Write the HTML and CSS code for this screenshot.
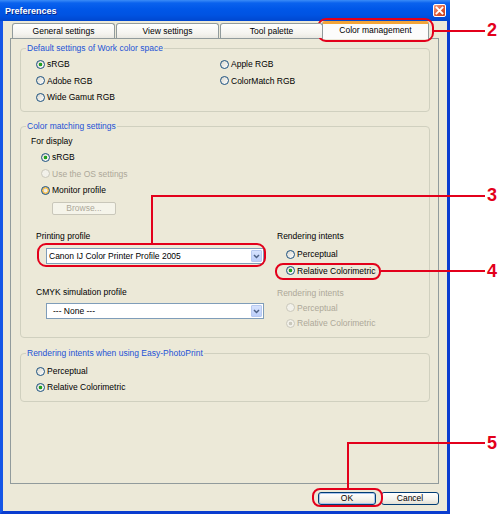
FILE: index.html
```html
<!DOCTYPE html>
<html>
<head>
<meta charset="utf-8">
<title>Preferences</title>
<link rel="stylesheet" href="styles.css">
</head>
<body>
<div class="page">
  <div class="window">
    <div class="titlebar">
      <span class="title">Preferences</span>
      <span class="close"><svg width="9" height="9" viewBox="0 0 9 9"><path d="M1.5 1.5 L7.5 7.5 M7.5 1.5 L1.5 7.5" stroke="#fff" stroke-width="1.8" stroke-linecap="square"/></svg></span>
    </div>
    <div class="client">
      <div class="tabs">
        <div class="tab">General settings</div>
        <div class="tab">View settings</div>
        <div class="tab">Tool palette</div>
        <div class="tab active">Color management</div>
      </div>
      <div class="panel">
        <fieldset class="group g1">
          <legend>Default settings of Work color space</legend>
          <div class="body grid2">
            <div class="opt"><span class="radio on"></span>sRGB</div>
            <div class="opt"><span class="radio"></span>Apple RGB</div>
            <div class="opt"><span class="radio"></span>Adobe RGB</div>
            <div class="opt"><span class="radio"></span>ColorMatch RGB</div>
            <div class="opt"><span class="radio"></span>Wide Gamut RGB</div>
          </div>
        </fieldset>

        <fieldset class="group g2">
          <legend>Color matching settings</legend>
          <div class="display">
            <div class="head">For display</div>
            <div class="opts">
              <div class="opt"><span class="radio on"></span>sRGB</div>
              <div class="opt dis"><span class="radio"></span>Use the OS settings</div>
              <div class="opt"><span class="radio hover"></span>Monitor profile</div>
            </div>
            <div class="browse">Browse...</div>
          </div>
          <div class="profiles">
            <div class="col">
              <div class="lbl">Printing profile</div>
              <div class="select s1"><span class="val">Canon IJ Color Printer Profile 2005</span><span class="arrow"><svg width="7" height="5" viewBox="0 0 7 5"><path d="M1 1 L3.5 3.5 L6 1" fill="none" stroke="#4d6185" stroke-width="1.5"/></svg></span></div>
              <div class="lbl l2">CMYK simulation profile</div>
              <div class="select s2"><span class="val none">--- None ---</span><span class="arrow"><svg width="7" height="5" viewBox="0 0 7 5"><path d="M1 1 L3.5 3.5 L6 1" fill="none" stroke="#4d6185" stroke-width="1.5"/></svg></span></div>
            </div>
            <div class="col right">
              <div class="lbl">Rendering intents</div>
              <div class="opt r1"><span class="radio"></span>Perceptual</div>
              <div class="opt r2"><span class="radio on"></span>Relative Colorimetric</div>
              <div class="lbl dis l3">Rendering intents</div>
              <div class="opt dis r3"><span class="radio"></span>Perceptual</div>
              <div class="opt dis r4"><span class="radio on"></span>Relative Colorimetric</div>
            </div>
          </div>
        </fieldset>

        <fieldset class="group g3">
          <legend>Rendering intents when using Easy-PhotoPrint</legend>
          <div class="body">
            <div class="opt"><span class="radio"></span>Perceptual</div>
            <div class="opt"><span class="radio on"></span>Relative Colorimetric</div>
          </div>
        </fieldset>
      </div>
      <div class="footer">
        <div class="btn default">OK</div>
        <div class="btn">Cancel</div>
      </div>
    </div>
  </div>

  <div class="callouts">
    <div class="oval o1"></div>
    <div class="oval o2"></div>
    <div class="oval o3"></div>
    <div class="oval o4"></div>
    <div class="line h1"></div>
    <div class="line h2"></div>
    <div class="line v2"></div>
    <div class="line h3"></div>
    <div class="line h4"></div>
    <div class="line v4"></div>
    <div class="num n2">2</div>
    <div class="num n3">3</div>
    <div class="num n4">4</div>
    <div class="num n5">5</div>
  </div>
</div>
</body>
</html>
```

FILE: styles.css
```css
html, body {
  margin: 0;
  padding: 0;
  background: #fff;
}
body {
  font-family: "Liberation Sans", Arial, sans-serif;
  font-size: 8.5px;
  color: #000;
}
.page {
  position: relative;
  width: 500px;
  height: 514px;
  overflow: hidden;
}
.window {
  width: 450px;
  height: 514px;
  display: flex;
  flex-direction: column;
}
.titlebar {
  flex: none;
  height: 21px;
  box-sizing: border-box;
  display: flex;
  align-items: center;
  padding: 0 4px 0 5px;
  background: linear-gradient(#3b8cf7 0, #0a62ee 3px, #0057e8 9px, #0053e2 15px, #0047cf 21px);
}
.title {
  color: #fff;
  font-weight: bold;
  font-size: 9px;
  text-shadow: 1px 1px 0 #0a2a8c;
}
.close {
  margin-left: auto;
  width: 13px;
  height: 13px;
  box-sizing: border-box;
  border: 1px solid #fff;
  border-radius: 2px;
  background: linear-gradient(135deg, #f2a186, #de5a36 55%, #c2401e);
  display: flex;
  align-items: center;
  justify-content: center;
}
.client {
  flex: 1;
  display: flex;
  flex-direction: column;
  background: #ece9d8;
  border: 3px solid #0a3ccf;
  border-left-color: #1556e6;
  border-top: 0;
  min-height: 0;
}
.tabs {
  flex: none;
  height: 17px;
  display: flex;
  align-items: flex-end;
  gap: 1px;
  padding-left: 9px;
  position: relative;
  z-index: 1;
}
.tab {
  flex: none;
  width: 103px;
  height: 15px;
  box-sizing: border-box;
  border: 1px solid #919b9c;
  border-bottom: 0;
  border-radius: 3px 3px 0 0;
  background: linear-gradient(#ffffff, #f4f3ee 70%, #e9e8e1);
  text-align: center;
  line-height: 14px;
}
.tab.active {
  width: 107px;
  height: 18px;
  margin: 0 -2px -1px;
  background: #fcfcfb;
  border-top: 3px solid #f2a53a;
  line-height: 13px;
}
.panel {
  flex: 1;
  margin: 0 8px 0 7px;
  border: 1px solid #919b9c;
  background: #ece9d8;
  padding: 4px 8px 0 9px;
  display: flex;
  flex-direction: column;
  min-height: 0;
}
.group {
  margin: 0;
  padding: 0;
  border: 1px solid #d0d0bf;
  border-radius: 4px;
  min-width: 0;
}
.group legend {
  margin-left: 5px;
  padding: 0 1px;
  line-height: 10px;
  color: #1d52d6;
}
.g1 .body {
  display: grid;
  grid-template-columns: 184px 1fr;
  grid-auto-rows: 16.5px;
  padding: 3px 0 5px 15px;
}
.opt {
  display: flex;
  align-items: center;
  white-space: nowrap;
}
.radio {
  flex: none;
  width: 9px;
  height: 9px;
  box-sizing: border-box;
  border: 1px solid #1c5180;
  border-radius: 50%;
  background: linear-gradient(135deg, #d9d7cc, #ffffff);
  margin-right: 2px;
}
.radio.on {
  background: radial-gradient(circle at center, #21a121 0, #21a121 1.5px, transparent 2.1px), linear-gradient(135deg, #d9d7cc, #ffffff);
}
.radio.hover {
  box-shadow: inset 0 0 0 1.5px #f9c04c;
}
.opt.dis, .lbl.dis {
  color: #aca899;
}
.opt.dis .radio {
  border-color: #cac8bb;
  background: #f2f1ea;
}
.opt.dis .radio.on {
  background: radial-gradient(circle at center, #cac8bb 0, #cac8bb 1.5px, transparent 2.1px), #f2f1ea;
}
.g2 {
  margin-top: 9.5px;
}
.display {
  padding: 2px 0 0 10px;
}
.display .head {
  height: 16px;
  line-height: 16px;
}
.display .opts {
  padding-left: 10px;
}
.display .opt {
  height: 16.5px;
}
.browse {
  margin: 3px 0 0 21px;
  width: 64px;
  height: 13px;
  box-sizing: border-box;
  border: 1px solid #c9c7ba;
  border-radius: 2px;
  background: #f5f4ea;
  color: #aca899;
  text-align: center;
  line-height: 11px;
}
.profiles {
  display: grid;
  grid-template-columns: 241px 1fr;
  padding: 13.5px 0 6px 15px;
}
.lbl {
  height: 16px;
  line-height: 16px;
  white-space: nowrap;
}
.lbl.l2 {
  margin-top: 20px;
}
.select {
  margin-left: 10px;
  width: 218px;
  height: 16px;
  box-sizing: border-box;
  border: 1px solid #7f9db9;
  background: #fff;
  display: flex;
  align-items: center;
}
.select.s1 {
  margin-top: 4px;
}
.select.s2 {
  margin-top: 3px;
}
.select .val {
  padding-left: 2px;
  white-space: nowrap;
}
.select .val.none {
  padding-left: 6px;
}
.select .arrow {
  margin: 0 1px 0 auto;
  width: 11px;
  height: 12px;
  box-sizing: border-box;
  border: 1px solid #b7c9f0;
  border-radius: 1px;
  background: linear-gradient(#d6e2fd, #bccffa);
  display: flex;
  align-items: center;
  justify-content: center;
}
.right .opt {
  margin-left: 9px;
}
.right .r1 {
  margin-top: 2px;
  height: 16px;
}
.right .r2 {
  height: 17px;
}
.right .l3 {
  margin-top: 7px;
  height: 14px;
  line-height: 14px;
}
.right .r3 {
  height: 15px;
}
.right .r4 {
  height: 16px;
}
.g3 {
  margin-top: 10px;
}
.g3 .body {
  padding: 5px 0 6px 15px;
}
.g3 .opt {
  height: 16px;
}
.footer {
  flex: none;
  height: 27px;
  box-sizing: border-box;
  display: flex;
  justify-content: flex-end;
  gap: 5px;
  padding: 8px 8px 0 0;
}
.btn {
  width: 58px;
  height: 13px;
  box-sizing: border-box;
  border: 1px solid #003c74;
  border-radius: 3px;
  background: linear-gradient(#ffffff, #f3f2ec 60%, #e3e0d4);
  text-align: center;
  line-height: 11px;
}
.btn.default {
  box-shadow: inset 0 0 0 1px #a9c4ef;
}
.callouts {
  position: absolute;
  left: 0;
  top: 0;
  width: 500px;
  height: 514px;
  pointer-events: none;
}
.oval {
  position: absolute;
  box-sizing: border-box;
  border: 2px solid #e3001b;
  border-radius: 9px;
}
.o1 { left: 317px; top: 18px; width: 117px; height: 24px; }
.o2 { left: 37px; top: 243px; width: 229px; height: 24px; }
.o3 { left: 275px; top: 263px; width: 106px; height: 17px; border-radius: 8px; }
.o4 { left: 312px; top: 488px; width: 71px; height: 19px; border-radius: 8px; }
.line {
  position: absolute;
  background: #e3001b;
}
.h1 { left: 434px; top: 30px; width: 51px; height: 2px; }
.h2 { left: 151px; top: 195px; width: 334px; height: 2px; }
.v2 { left: 151px; top: 195px; width: 2px; height: 48px; }
.h3 { left: 381px; top: 270px; width: 104px; height: 2px; }
.h4 { left: 347px; top: 442px; width: 138px; height: 2px; }
.v4 { left: 347px; top: 442px; width: 2px; height: 46px; }
.num {
  position: absolute;
  left: 487px;
  font-family: "Liberation Sans", Arial, sans-serif;
  font-weight: bold;
  font-size: 18px;
  line-height: 18px;
  color: #e3001b;
}
.n2 { top: 21px; }
.n3 { top: 186px; }
.n4 { top: 262px; }
.n5 { top: 434px; }
```
